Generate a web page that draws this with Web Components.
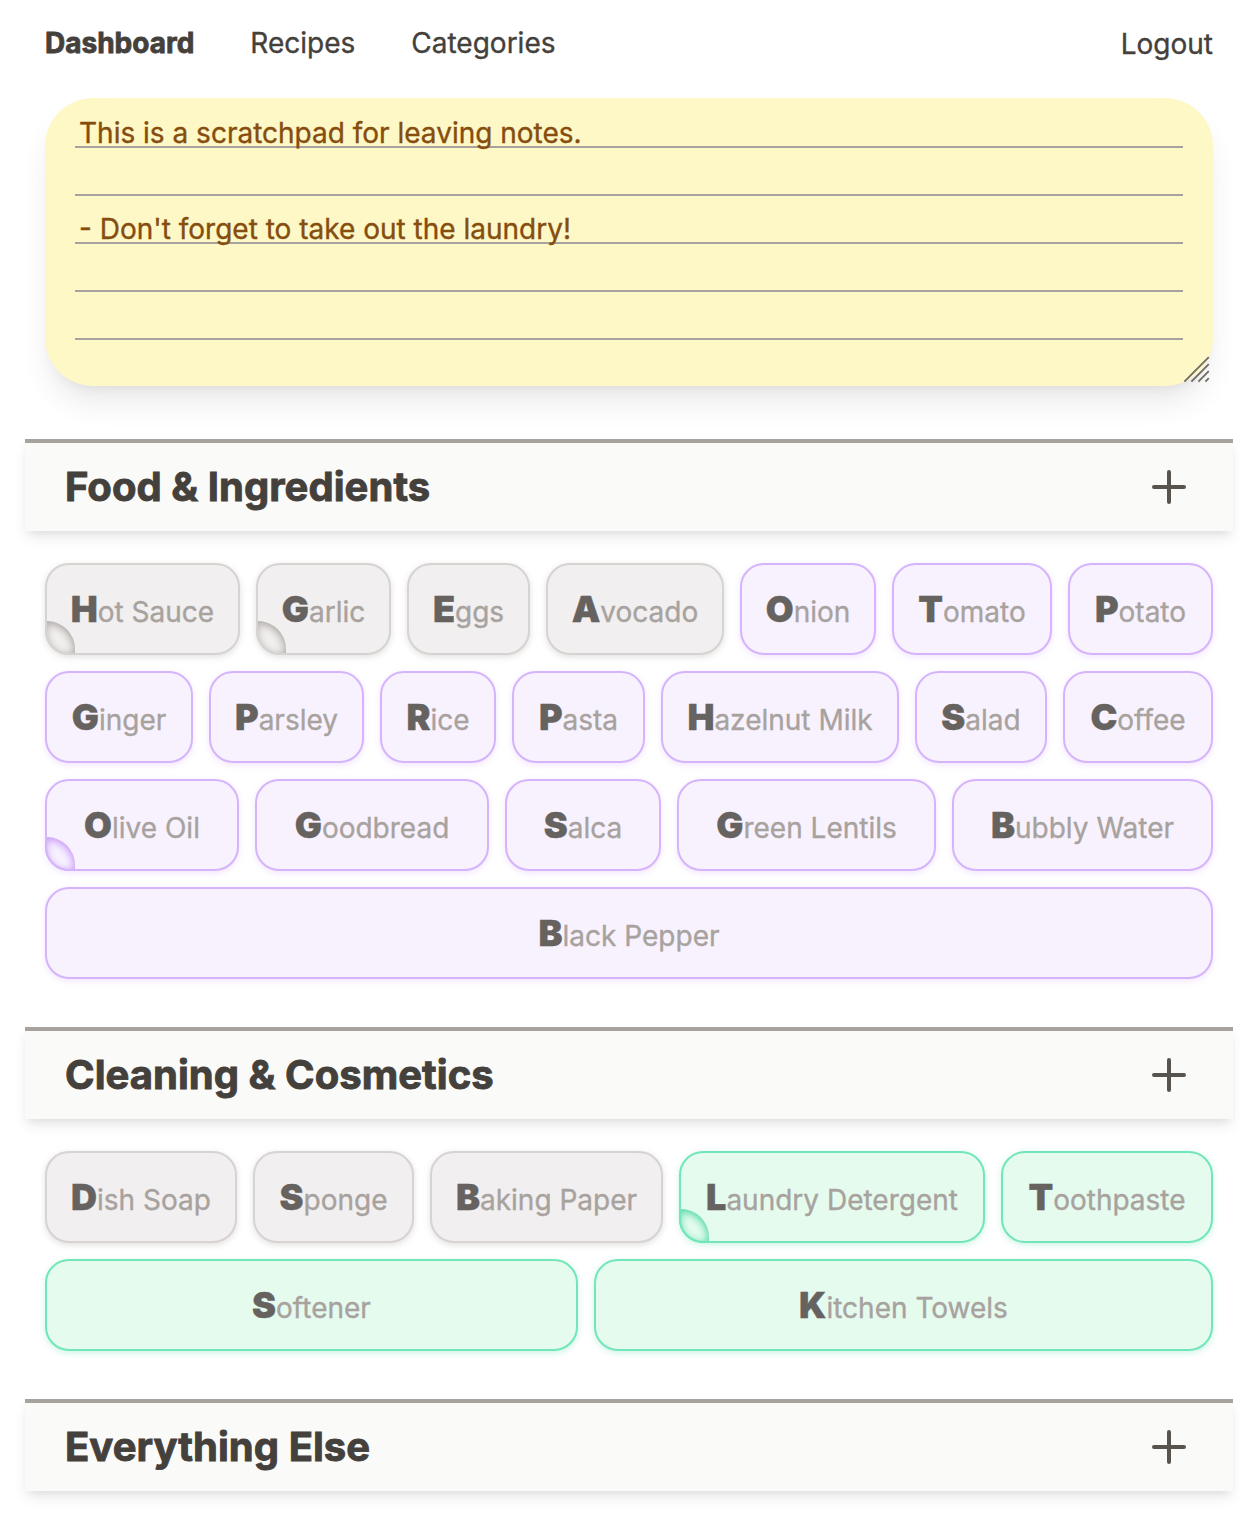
<!DOCTYPE html>
<html lang="en">
<head>
<meta charset="utf-8">
<title>Dashboard</title>
<style>
  body { margin: 0; background: #fff; font-family: Inter, "Liberation Sans", sans-serif; color: #44403c; -webkit-text-stroke: .35px; }
</style>
</head>
<body>
<shopping-dashboard></shopping-dashboard>
<script>
const define = (name, html, setup) => {
  const template = document.createElement('template');
  template.innerHTML = html;
  customElements.define(name, class extends HTMLElement {
    constructor() {
      super();
      this.attachShadow({ mode: 'open' }).append(template.content.cloneNode(true));
    }
    connectedCallback() { if (setup) setup(this, this.shadowRoot); }
  });
};

define('nav-bar', `
<style>
  :host { display: flex; justify-content: space-between; padding: 23px 0 0; height: 75px; box-sizing: border-box; font-size: 28px; line-height: 40px; }
  nav { display: flex; gap: 56px; }
  a { color: inherit; text-decoration: none; white-space: nowrap; }
  .current { font-weight: 700; -webkit-text-stroke: .8px; }
  .logout { margin-top: 1px; }
</style>
<nav><a class="current">Dashboard</a><a>Recipes</a><a>Categories</a></nav>
<a class="logout">Logout</a>`);

define('scratch-pad', `
<style>
  :host { display: block; position: relative; height: 288px; box-sizing: border-box; padding: 11px 30px 0; border-radius: 48px; background: #fef7c6; color: #854d0e; box-shadow: 0 20px 30px -6px rgba(68,56,56,.12), 0 8px 12px -8px rgba(68,56,56,.1); }
  .paper { height: 240px; padding: 0 4px; font-size: 28px; line-height: 48px; white-space: pre-line;
    background: repeating-linear-gradient(transparent 0 37px, #a8a29e 37px 39px, transparent 39px 48px); }
  svg { position: absolute; right: 3px; bottom: 3px; }
</style>
<div class="paper"><slot></slot></div>
<svg width="28" height="28" viewBox="0 0 28 28" stroke="#6f6c62" stroke-width="1.8" fill="none"><path d="M2.4 26.6 26.8 2.2M9.4 26.6 26.8 9.2M16.4 26.6 26.8 16.2M23.4 26.6l3.4-3.4"/></svg>`);

define('item-chip', `
<style>
  :host { --bg: #f1efef; --line: #d6d3d1; --deep: #a8a29e; --glow: rgba(120,113,108,.22);
    display: flex; justify-content: center; align-items: baseline; position: relative; flex: 1 1 var(--w); min-width: 0; height: 92px; box-sizing: border-box; padding-top: 24px;
    border: 2px solid var(--line); border-radius: 24px; background: var(--bg); box-shadow: 0 2px 6px var(--glow); font-size: 28px; line-height: 40px; color: #a8a29e; white-space: pre; }
  :host([tone=purple]) { --bg: #f8f2ff; --line: #d5b4fb; --deep: #c48ef8; --glow: rgba(192,132,252,.22); }
  :host([tone=green]) { --bg: #e4fbee; --line: #72e6b8; --deep: #42d79c; --glow: rgba(52,211,153,.25); }
  b { font-size: 36px; font-weight: 900; color: #666260; }
  .corner { display: none; position: absolute; left: -2px; bottom: -2px; width: 30px; height: 34px; box-sizing: border-box; border: solid var(--line); border-width: 0 0 2px 2px; border-radius: 0 30px 0 24px; background: var(--bg); box-shadow: inset -1px 2px 8px var(--deep); }
  :host([marked]) .corner { display: block; }
</style>
<b></b><span></span><i class="corner"></i>`, (host, root) => {
  const name = host.getAttribute('name');
  root.querySelector('b').textContent = name[0];
  root.querySelector('span').textContent = name.slice(1);
  host.style.setProperty('--w', host.getAttribute('width') + 'px');
});

define('chip-row', `
<style>:host { display: flex; gap: 16px; }</style><slot></slot>`);

define('item-section', `
<style>
  :host { display: block; margin-bottom: 48px; }
  header { display: flex; justify-content: space-between; align-items: center; height: 92px; box-sizing: border-box; margin: 0 -20px; padding: 0 45px 0 40px; border-top: 4px solid #a8a29e; background: #fafaf9; box-shadow: 0 8px 12px -2px rgba(68,56,56,.11), 0 4px 8px -4px rgba(68,56,56,.1); }
  h2 { margin: 0; font-size: 40px; line-height: 56px; font-weight: 700; letter-spacing: .04px; -webkit-text-stroke: .9px; }
  .rows { display: flex; flex-direction: column; gap: 16px; padding-top: 32px; }
</style>
<header><h2></h2><svg width="38" height="38" viewBox="0 0 38 38" stroke="#57534e" stroke-width="4" stroke-linecap="round"><path d="M4 19h30M19 4v30"/></svg></header>
<div class="rows"><slot></slot></div>`, (host, root) => {
  root.querySelector('h2').textContent = host.getAttribute('heading');
});

define('shopping-dashboard', `
<style>
  :host { display: block; height: 1532px; box-sizing: border-box; overflow: hidden; padding: 0 47px 0 45px; }
  nav-bar { margin-bottom: 23px; }
  scratch-pad { margin-bottom: 53px; }
</style>
<nav-bar></nav-bar>
<scratch-pad>This is a scratchpad for leaving notes.

- Don't forget to take out the laundry!</scratch-pad>
<item-section heading="Food &amp; Ingredients">
  <chip-row>
    <item-chip name="Hot Sauce" width="195" marked></item-chip>
    <item-chip name="Garlic" width="135" marked></item-chip>
    <item-chip name="Eggs" width="123"></item-chip>
    <item-chip name="Avocado" width="178"></item-chip>
    <item-chip name="Onion" width="136" tone="purple"></item-chip>
    <item-chip name="Tomato" width="160" tone="purple"></item-chip>
    <item-chip name="Potato" width="145" tone="purple"></item-chip>
  </chip-row>
  <chip-row>
    <item-chip name="Ginger" width="148" tone="purple"></item-chip>
    <item-chip name="Parsley" width="155" tone="purple"></item-chip>
    <item-chip name="Rice" width="116" tone="purple"></item-chip>
    <item-chip name="Pasta" width="133" tone="purple"></item-chip>
    <item-chip name="Hazelnut Milk" width="238" tone="purple"></item-chip>
    <item-chip name="Salad" width="132" tone="purple"></item-chip>
    <item-chip name="Coffee" width="150" tone="purple"></item-chip>
  </chip-row>
  <chip-row>
    <item-chip name="Olive Oil" width="194" tone="purple" marked></item-chip>
    <item-chip name="Goodbread" width="234" tone="purple"></item-chip>
    <item-chip name="Salca" width="156" tone="purple"></item-chip>
    <item-chip name="Green Lentils" width="259" tone="purple"></item-chip>
    <item-chip name="Bubbly Water" width="261" tone="purple"></item-chip>
  </chip-row>
  <chip-row>
    <item-chip name="Black Pepper" width="1168" tone="purple"></item-chip>
  </chip-row>
</item-section>
<item-section heading="Cleaning &amp; Cosmetics">
  <chip-row>
    <item-chip name="Dish Soap" width="192"></item-chip>
    <item-chip name="Sponge" width="161"></item-chip>
    <item-chip name="Baking Paper" width="233"></item-chip>
    <item-chip name="Laundry Detergent" width="306" tone="green" marked></item-chip>
    <item-chip name="Toothpaste" width="212" tone="green"></item-chip>
  </chip-row>
  <chip-row>
    <item-chip name="Softener" width="533" tone="green"></item-chip>
    <item-chip name="Kitchen Towels" width="619" tone="green"></item-chip>
  </chip-row>
</item-section>
<item-section heading="Everything Else"></item-section>`);
</script>
</body>
</html>
